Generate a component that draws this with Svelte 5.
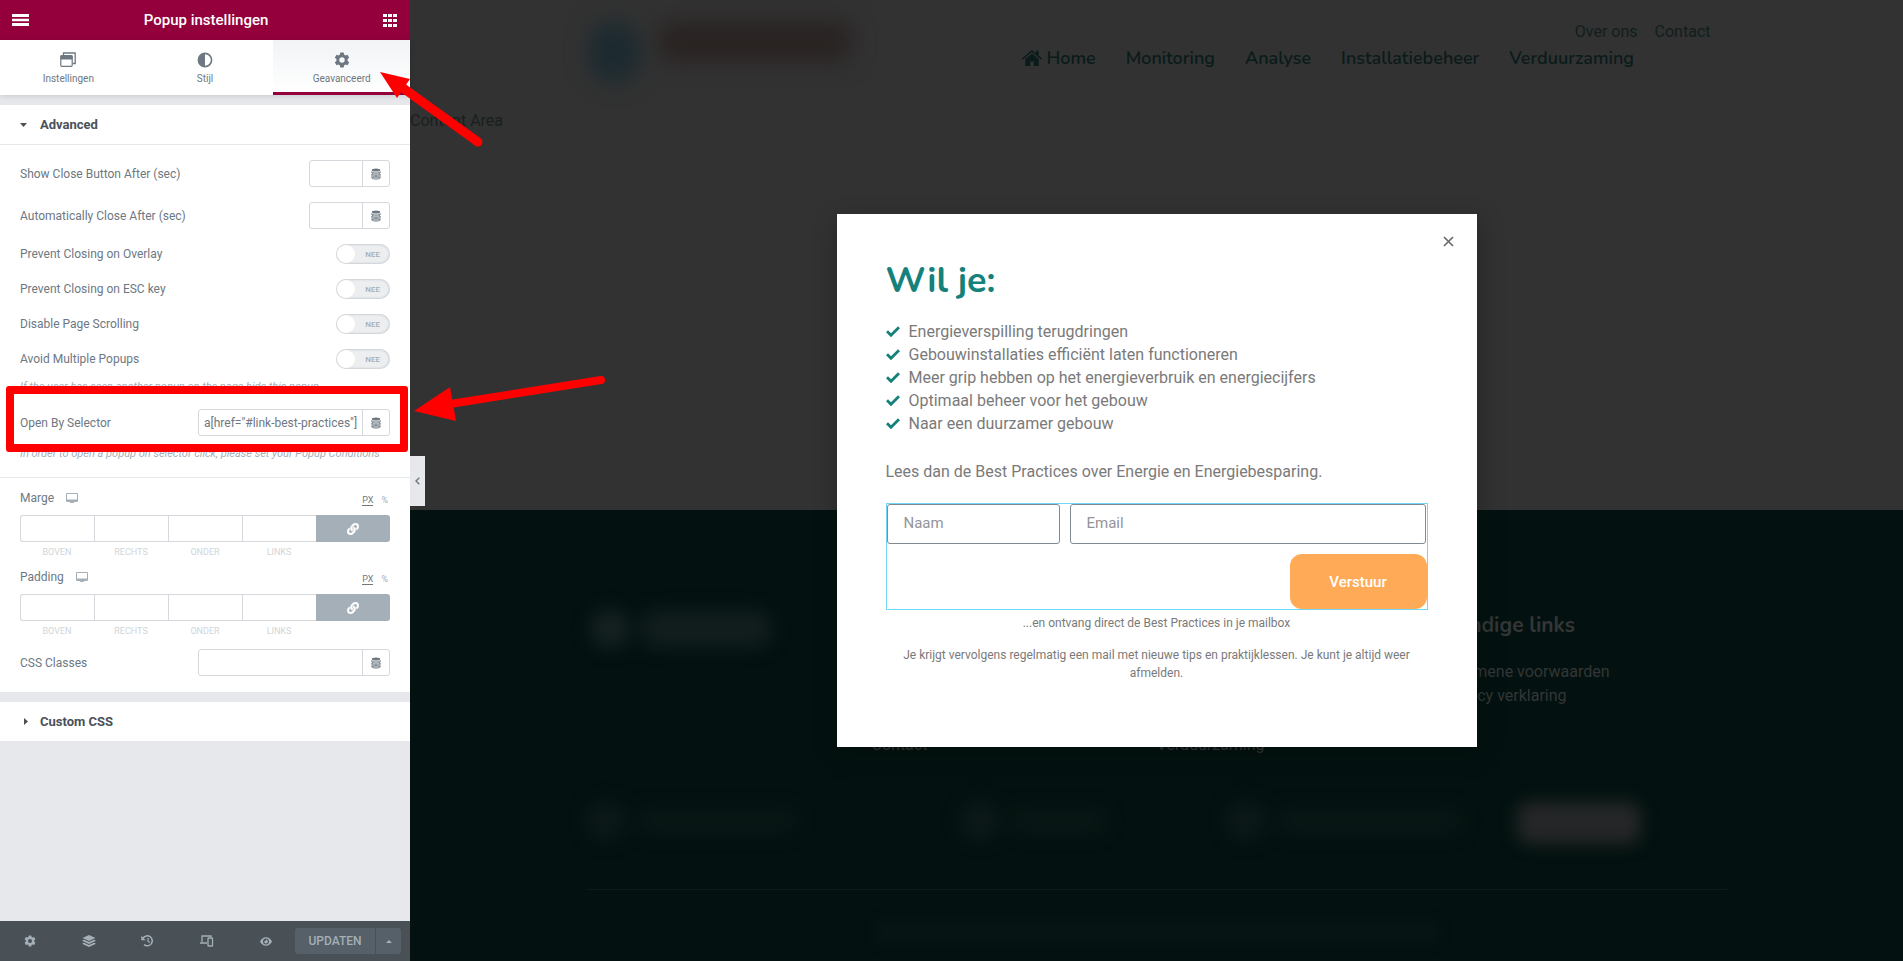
<script>
  const tabs = [
    { id: 'settings', label: 'Instellingen' },
    { id: 'style', label: 'Stijl' },
    { id: 'advanced', label: 'Geavanceerd' }
  ];
  const switches = ['Prevent Closing on Overlay', 'Prevent Closing on ESC key', 'Disable Page Scrolling', 'Avoid Multiple Popups'];
  const sides = ['Boven', 'Rechts', 'Onder', 'Links'];
  const nav = ['Monitoring', 'Analyse', 'Installatiebeheer', 'Verduurzaming'];
  const benefits = [
    'Energieverspilling terugdringen',
    'Gebouwinstallaties efficiënt laten functioneren',
    'Meer grip hebben op het energieverbruik en energiecijfers',
    'Optimaal beheer voor het gebouw',
    'Naar een duurzamer gebouw'
  ];
  let active = $state('advanced');
  let selector = $state('a[href="#link-best-practices"]');
</script>

{#snippet database()}
  <svg width="10" height="12" viewBox="0 0 10 12" fill="none" stroke="currentColor" stroke-width=".9" aria-hidden="true">
    <ellipse cx="5" cy="2" rx="4.200" ry="1.500" fill="currentColor" stroke="none" />
    <path d="M.8 3.600c0 1.800 8.400 1.800 8.400 0v1.200c0 1.700-8.400 1.700-8.400 0zM.8 6.100c0 1.700 8.400 1.700 8.400 0v1.200c0 1.700-8.400 1.700-8.400 0zM.8 8.600c0 1.700 8.400 1.700 8.400 0v1.200c0 1.700-8.400 1.700-8.400 0z" />
  </svg>
{/snippet}

{#snippet gear(size)}
  <svg width={size} height={size} viewBox="0 0 16 16" fill="currentColor" fill-rule="evenodd" aria-hidden="true">
    <path d="M6.300.6h3.400l.4 2 1.400.8 2-.7 1.700 3-1.600 1.400v1.800l1.600 1.400-1.700 3-2-.7-1.400.8-.4 2H6.300l-.4-2-1.400-.8-2 .7-1.700-3 1.600-1.400V7.100L.8 5.700l1.700-3 2 .7 1.400-.8zM8 5.300a2.700 2.700 0 1 0 0 5.400 2.700 2.700 0 0 0 0-5.400z" />
  </svg>
{/snippet}

{#snippet dimensions(name)}
  <fieldset class="dims">
    <legend class="sr">{name}</legend>
    <div class="dims-head">
      <span>{name}</span>
      <svg width="12" height="10" viewBox="0 0 12 10" fill="#a4afb7" aria-hidden="true"><path fill-rule="evenodd" d="M1 0h10a1 1 0 0 1 1 1v7a1 1 0 0 1-1 1H8L7.500 10h-3L4 9H1a1 1 0 0 1-1-1V1a1 1 0 0 1 1-1zM1 1v5.500h10V1z" /></svg>
      <span class="units"><button class="unit on">PX</button><button class="unit">%</button></span>
    </div>
    <div class="dims-grid">
      {#each sides as side}
        <label><input type="text" /><span>{side}</span></label>
      {/each}
      <button class="link" aria-label="Link">
        <svg width="12" height="12" viewBox="0 0 512 512" fill="#fff" stroke="#fff" stroke-width="16" aria-hidden="true"><path d="M326.612 185.391c59.747 59.809 58.927 155.698.36 214.590-.11.120-.240.250-.360.370l-67.200 67.200c-59.270 59.270-155.699 59.262-214.960 0-59.270-59.260-59.270-155.700 0-214.960l37.106-37.106c9.840-9.840 26.786-3.300 27.294 10.606.648 17.722 3.826 35.527 9.690 52.721 1.986 5.822.567 12.262-3.783 16.612l-13.087 13.087c-28.026 28.026-28.905 73.660-1.155 101.960 28.024 28.579 74.086 28.749 102.325.510l67.200-67.190c28.191-28.191 28.073-73.757 0-101.830-3.701-3.694-7.429-6.564-10.341-8.569a16.037 16.037 0 0 1-6.947-12.606c-.396-10.567 3.348-21.456 11.698-29.806l21.054-21.055c5.521-5.521 14.182-6.199 20.584-1.731a152.482 152.482 0 0 1 20.522 17.197zM467.547 44.449c-59.261-59.262-155.690-59.270-214.960 0l-67.200 67.200c-.120.120-.250.250-.360.370-58.566 58.892-59.387 154.781.360 214.590a152.454 152.454 0 0 0 20.521 17.196c6.402 4.468 15.064 3.789 20.584-1.731l21.054-21.055c8.350-8.350 12.094-19.239 11.698-29.806a16.037 16.037 0 0 0-6.947-12.606c-2.912-2.005-6.640-4.875-10.341-8.569-28.073-28.073-28.191-73.639 0-101.830l67.200-67.190c28.239-28.239 74.300-28.069 102.325.510 27.750 28.300 26.872 73.934-1.155 101.960l-13.087 13.087c-4.350 4.350-5.769 10.790-3.783 16.612 5.864 17.194 9.042 34.999 9.690 52.721.509 13.906 17.454 20.446 27.294 10.606l37.106-37.106c59.271-59.259 59.271-155.699.001-214.959z" /></svg>
      </button>
    </div>
  </fieldset>
{/snippet}

<div class="app">
  <aside class="panel">
    <header class="bar">
      <button aria-label="Menu"><svg width="17" height="12" viewBox="0 0 17 12" fill="#fff"><path d="M0 0h17v3H0zM0 4.700h17v2.600H0zM0 9h17v3H0z" /></svg></button>
      <h1>Popup instellingen</h1>
      <button aria-label="Widgets"><svg width="14" height="13" viewBox="0 0 14 13" fill="#fff"><path d="M0 0h4v3H0zM5 0h4v3H5zM10 0h4v3h-4zM0 5h4v3H0zM5 5h4v3H5zM10 5h4v3h-4zM0 10h4v3H0zM5 10h4v3H5zM10 10h4v3h-4z" /></svg></button>
    </header>

    <nav class="tabs">
      {#each tabs as tab}
        <button class:active={active === tab.id} onclick={() => (active = tab.id)}>
          {#if tab.id === 'settings'}
            <svg width="16" height="16" viewBox="0 0 16 16" fill="none" stroke="currentColor" aria-hidden="true"><rect x=".8" y="3.500" width="11.400" height="10.800" rx="1" stroke-width="1.200" /><path d="M.5 3.500h12v4H.5z" fill="currentColor" stroke="none" /><path d="M3.500 3V1h11.700v10.500h-2.500" stroke-width="1.300" /></svg>
          {:else if tab.id === 'style'}
            <svg width="16" height="16" viewBox="0 0 16 16" aria-hidden="true"><circle cx="8" cy="8" r="6.600" fill="none" stroke="currentColor" stroke-width="1.600" /><path d="M8 1a7 7 0 0 0 0 14z" fill="currentColor" /></svg>
          {:else}
            {@render gear(16)}
          {/if}
          <span>{tab.label}</span>
        </button>
      {/each}
    </nav>

    <section class="block">
      <button class="block-head ruled"><svg width="7" height="4" viewBox="0 0 7 4" fill="currentColor"><path d="M0 0h7L3.500 4z" /></svg>Advanced</button>
      <div class="controls">
        {#each ['Show Close Button After (sec)', 'Automatically Close After (sec)'] as label, i}
          <div class="row field-row">
            <label for="num{i}">{label}</label>
            <div class="field small"><input id="num{i}" type="text" /><button aria-label="Dynamic">{@render database()}</button></div>
          </div>
        {/each}
        {#each switches as label}
          <label class="row switch-row">
            <span>{label}</span>
            <span class="switch"><input type="checkbox" /><i></i><em>Nee</em></span>
          </label>
        {/each}
        <p class="hint first">If the user has seen another popup on the page hide this popup</p>
        <div class="row marked">
          <label for="sel">Open By Selector</label>
          <div class="field"><input id="sel" type="text" bind:value={selector} /><button aria-label="Dynamic">{@render database()}</button></div>
        </div>
        <p class="hint">In order to open a popup on selector click, please set your Popup Conditions</p>
      </div>
      <div class="controls spacing">
        {@render dimensions('Marge')}
        {@render dimensions('Padding')}
        <div class="row">
          <label for="css">CSS Classes</label>
          <div class="field"><input id="css" type="text" /><button aria-label="Dynamic">{@render database()}</button></div>
        </div>
      </div>
    </section>

    <section class="block">
      <button class="block-head"><svg class="side" width="4" height="7" viewBox="0 0 4 7" fill="currentColor"><path d="M0 0v7l4-3.500z" /></svg>Custom CSS</button>
    </section>

    <footer class="tools">
      <button aria-label="Settings">{@render gear(12)}</button>
      <button aria-label="Navigator"><svg width="14" height="12" viewBox="0 0 14 12" fill="currentColor"><path d="M7 0l6.500 3L7 6 .5 3z" /><path d="M.5 5.300L2 4.700l5 2.300 5-2.300 1.500.6v.7L7 9 .5 6zM.5 8.300L2 7.700 7 10l5-2.300 1.500.6V9L7 12 .5 9z" /></svg></button>
      <button aria-label="History"><svg width="13" height="12" viewBox="0 0 13 12" fill="none" stroke="currentColor" stroke-width="1.500"><path d="M2 3.200A5 5 0 1 1 3 9.600" /><path d="M7 3v3.300l1.800 1.300" stroke-width="1.200" /><path d="M.3.8v4.400h4.400z" fill="currentColor" stroke="none" /></svg></button>
      <button aria-label="Responsive"><svg width="14" height="12" viewBox="0 0 14 12" fill="none" stroke="currentColor" stroke-width="1.300"><path d="M2 7V1h9v1M0 8h7" /><rect x="8" y="3" width="4.500" height="8" rx=".6" /></svg></button>
      <button aria-label="Preview"><svg width="12" height="9" viewBox="0 0 12 9" fill="currentColor" fill-rule="evenodd"><path d="M6 .3c2.800 0 4.800 1.700 6 4.200-1.200 2.500-3.200 4.200-6 4.200S1.200 7 0 4.500C1.200 2 3.200.3 6 .3zm0 1.200a3 3 0 1 0 0 6 3 3 0 0 0 0-6zm0 1.100a1.900 1.900 0 1 1-1.900 1.900L5.500 4z" /></svg></button>
      <div class="publish"><button>Updaten</button><button aria-label="Options"><svg width="6" height="3" viewBox="0 0 6 3" fill="currentColor"><path d="M3 0l3 3H0z" /></svg></button></div>
    </footer>
  </aside>

  <main class="preview">
    <header class="site-head">
      <div class="logo"><i></i><b></b></div>
      <div class="menus">
        <nav class="top-menu"><a href="#over">Over ons</a><a href="#contact">Contact</a></nav>
        <nav class="main-menu">
          <a href="#home"><svg width="20" height="16" viewBox="0 0 20 16" fill="currentColor" aria-hidden="true"><path d="M10 0l4 3.400V.8h2.600v4.800L20 8.500l-1 1.100-9-7.500-9 7.500-1-1.100z" /><path d="M10 3.600l6.800 5.700V16h-5v-4.500H8.300V16h-5V9.300z" /></svg>Home</a>
          {#each nav as item}<a href="#{item}">{item}</a>{/each}
        </nav>
      </div>
    </header>
    <div class="content">Content Area</div>
    <footer class="site-foot">
      <div class="foot-inner">
        <div class="columns">
          <div class="ghost"><i class="dot"></i><i class="pill"></i></div>
          <a class="low" href="#contact">Contact</a>
          <a class="low" href="#verduurzaming">Verduurzaming</a>
          <div class="links">
            <h3>Handige links</h3>
            <a href="#voorwaarden">Algemene voorwaarden</a>
            <a href="#privacy">Privacy verklaring</a>
          </div>
        </div>
        <div class="contact-row">
          <div class="ghost dim"><i class="dot"></i><i class="pill"></i></div>
          <div class="ghost dim narrow"><i class="dot"></i><i class="pill"></i></div>
          <div class="ghost dim wide"><i class="dot"></i><i class="pill"></i></div>
          <i class="badge"></i>
        </div>
        <div class="copyright"><i></i></div>
      </div>
    </footer>

    <div class="overlay">
      <div class="dialog" role="dialog" aria-label="Wil je:">
        <button class="close" aria-label="Sluiten"><svg width="11" height="11" viewBox="0 0 11 11" stroke="#6b6b6b" stroke-width="1.700"><path d="M1 1l9 9M10 1l-9 9" /></svg></button>
        <h2>Wil je:</h2>
        <ul>
          {#each benefits as text}
            <li><svg width="14" height="11" viewBox="0 0 14 11" fill="none" stroke="#16817b" stroke-width="2.800" aria-hidden="true"><path d="M1 5.300l4 4L13 1.200" /></svg>{text}</li>
          {/each}
        </ul>
        <p class="lead">Lees dan de Best Practices over Energie en Energiebesparing.</p>
        <form onsubmit={(e) => e.preventDefault()}>
          <div class="inputs">
            <input class="name" type="text" placeholder="Naam" aria-label="Naam" />
            <input class="email" type="email" placeholder="Email" aria-label="Email" />
          </div>
          <button>Verstuur</button>
        </form>
        <p class="note">...en ontvang direct de Best Practices in je mailbox</p>
        <p class="note">Je krijgt vervolgens regelmatig een mail met nieuwe tips en praktijklessen. Je kunt je altijd weer afmelden.</p>
      </div>
    </div>
    <button class="collapse" aria-label="Paneel verbergen"><svg width="5" height="8" viewBox="0 0 5 8" fill="none" stroke="#6d7882" stroke-width="1.400"><path d="M4.300.7L1 4l3.300 3.300" /></svg></button>
  </main>

  <svg class="arrows" width="620" height="440" viewBox="0 0 620 440" fill="#f00" stroke="#f00" aria-hidden="true">
    <path d="M380 72l30 7-13 19z" stroke="none" /><path d="M403 88l75 54" stroke-width="9" stroke-linecap="round" />
    <path d="M414 411l36-24 6 34z" stroke="none" /><path d="M450 404l151-24" stroke-width="8" stroke-linecap="round" />
  </svg>
</div>

<style>
  :global(body) { margin: 0; }
  .app, .app * { box-sizing: border-box; }
  .app { position: relative; display: flex; min-height: 100vh; font-family: Roboto, sans-serif; background: #323232; overflow: hidden; }
  button { border: 0; background: none; padding: 0; font: inherit; color: inherit; text-transform: inherit; cursor: pointer; }
  svg { display: block; flex: none; }
  a { color: inherit; text-decoration: none; }
  h1, h2, h3, p, ul { margin: 0; padding: 0; }
  input { font: inherit; color: inherit; min-width: 0; }
  .sr { position: absolute; width: 1px; height: 1px; overflow: hidden; clip-path: inset(50%); }

  .panel { display: flex; flex-direction: column; flex: 0 0 410px; background: #e6e8ec; color: #6d7882; font-size: 12px; }
  .bar { display: flex; align-items: center; justify-content: space-between; height: 40px; padding: 0 13px 0 12px; background: #93003c; color: #fff; }
  .bar h1 { font-size: 15px; font-weight: 500; }
  .tabs { display: grid; grid-template-columns: repeat(3, 1fr); height: 55px; background: #fff; box-shadow: 0 1px 6px rgba(0, 0, 0, 0.14); }
  .tabs button { display: flex; flex-direction: column; align-items: center; gap: 5px; padding-top: 12px; border-bottom: 3px solid transparent; font-size: 10px; line-height: 12px; }
  .tabs .active { border-color: #93003c; background: linear-gradient(#f1f3f5, #fff); }
  .block { margin-top: 10px; background: #fff; }
  .block-head { display: flex; align-items: center; gap: 13px; width: 100%; height: 39px; padding-left: 20px; font-size: 13px; font-weight: 700; color: #495157; }
  .ruled { height: 40px; border-bottom: 1px solid #e6e9ec; }
  .side { margin: 0 -1px 0 4px; }
  .controls { padding: 15px 20px; }
  .row { display: flex; align-items: center; justify-content: space-between; }
  .field-row { margin-bottom: 15px; }
  .switch-row { height: 20px; margin-bottom: 15px; }
  .field { display: flex; width: 192px; height: 27px; border: 1px solid #d5d8dc; border-radius: 3px; background: #fff; overflow: hidden; }
  .field.small { width: 81px; }
  .field input { flex: 1; border: 0; outline: 0; padding: 0 5px; background: none; }
  .field button { display: grid; place-items: center; width: 27px; border-left: 1px solid #d5d8dc; }
  .switch { position: relative; display: flex; align-items: center; justify-content: flex-end; width: 54px; height: 20px; padding-right: 10px; border-radius: 10px; background: #eceef0; box-shadow: inset 0 0 2px 1px #ccd0d4; }
  .switch input { position: absolute; inset: 0; margin: 0; opacity: 0; }
  .switch i { position: absolute; left: 1px; top: 1px; width: 18px; height: 18px; border-radius: 50%; background: #fff; }
  .switch em { font-size: 8px; font-style: normal; font-weight: 500; text-transform: uppercase; color: #a4afb7; }
  .hint { font-size: 11px; line-height: 16px; font-style: italic; color: #a4afb7; white-space: nowrap; }
  .hint.first { margin-top: -5px; }
  .marked { position: relative; height: 66px; margin: -9px -18px -6px -14px; padding: 7px 18px 0 14px; outline: 8px solid #f00; outline-offset: -8px; border-radius: 3px; }
  .spacing { padding: 13px 20px 16px; border-top: 1px solid #e6e9ec; }
  .dims { border: 0; margin: 0 0 12px; padding: 0; min-width: 0; }
  .dims-head { display: flex; align-items: center; gap: 12px; height: 14px; margin-bottom: 10px; }
  .units { display: flex; gap: 8px; margin-left: auto; padding: 4px 2px 0 0; font-size: 9px; line-height: 10px; color: #a4afb7; }
  .on { color: #6d7882; border-bottom: 1px solid #6d7882; }
  .dims-grid { display: grid; grid-template-columns: repeat(5, 1fr); align-items: start; }
  .dims-grid input { display: block; width: 100%; height: 27px; border: 1px solid #d5d8dc; border-right-width: 0; outline: 0; padding: 0 5px; }
  .dims-grid label:first-child input { border-radius: 3px 0 0 3px; }
  .dims-grid span { display: block; padding-top: 4px; font-size: 9px; line-height: 12px; text-align: center; text-transform: uppercase; color: #d0d5da; }
  .link { display: grid; place-items: center; height: 27px; border-radius: 0 3px 3px 0; background: #a4afb7; }

  .tools { display: flex; align-items: center; height: 40px; margin-top: auto; padding-right: 9px; background: #495157; color: #a4afb7; }
  .tools > button { display: grid; place-items: center; flex: 1; height: 40px; }
  .publish { display: flex; gap: 1px; height: 26px; font-weight: 500; text-transform: uppercase; }
  .publish button { display: grid; place-items: center; width: 25px; background: #556068; border-radius: 0 3px 3px 0; }
  .publish button:first-child { width: 80px; border-radius: 3px 0 0 3px; }

  .preview { position: relative; display: flex; flex-direction: column; flex: 1; min-width: 0; font-size: 16px; color: #191f1f; }
  .site-head { display: flex; justify-content: space-between; width: 1140px; max-width: 100%; height: 110px; margin: 0 auto; padding-top: 21px; }
  .logo { display: flex; gap: 18px; filter: blur(11px); }
  .logo i { width: 54px; height: 62px; border-radius: 50%; background: #1c2a30; }
  .logo b { width: 192px; height: 40px; border-radius: 8px; background: #292322; }
  .menus { width: 705px; }
  .top-menu { display: flex; justify-content: flex-end; gap: 17px; padding-right: 16px; line-height: 22px; color: #111e1d; }
  .main-menu { display: flex; gap: 30px; padding-top: 4px; font: 600 18px/22px Nunito, "Open Sans", sans-serif; color: #0a1b1a; white-space: nowrap; }
  .main-menu a { display: flex; align-items: center; gap: 5px; }
  .content { height: 400px; line-height: 22px; }
  .site-foot { flex: 1; background: #031210; color: #343636; }
  .foot-inner { width: 1140px; max-width: 100%; margin: 0 auto; padding-top: 100px; }
  .columns { display: grid; grid-template-columns: repeat(4, 1fr); height: 147px; }
  .links { line-height: 24px; white-space: nowrap; }
  .links h3 { font: 700 21px/30px Nunito, "Open Sans", sans-serif; margin-bottom: 20px; }
  .links a { display: block; }
  .low { align-self: end; line-height: 24px; }
  .ghost { display: flex; align-items: center; align-self: start; gap: 12px; filter: blur(9px); }
  .dot { width: 38px; height: 38px; margin-left: 4px; border-radius: 50%; background: #162222; }
  .pill { width: 130px; height: 36px; border-radius: 15px; background: #121e1e; }
  .contact-row { display: grid; grid-template-columns: 374px 266px 290px 1fr; height: 133px; padding-top: 45px; border-bottom: 1px solid #0d1d1b; }
  .dim .dot { margin-left: 0; background: #0c1918; }
  .dim .pill { width: 160px; height: 24px; background: #091715; }
  .narrow .pill { width: 95px; }
  .wide .pill { width: 185px; }
  .badge { width: 124px; height: 42px; border-radius: 14px; background: #252627; filter: blur(8px); }
  .copyright { display: grid; place-items: center; padding-top: 32px; filter: blur(6px); }
  .copyright i { width: 560px; height: 20px; background: #071614; }

  .overlay { position: absolute; inset: 0; display: grid; place-items: center; }
  .dialog { position: relative; width: 640px; max-width: 100%; min-height: 533px; padding: 46px 49px; background: #fff; color: #7a7a7a; box-shadow: 2px 8px 23px 3px rgba(0, 0, 0, 0.2); }
  .close { position: absolute; top: 22px; right: 23px; }
  h2 { font: 700 36px/42px Nunito, "Open Sans", sans-serif; color: #16817b; }
  ul { margin-top: 18px; list-style: none; }
  li { display: flex; align-items: center; gap: 9px; line-height: 23px; height: 23px; }
  .lead { margin: 25px 0 19px; line-height: 24px; }
  form { display: flex; flex-direction: column; justify-content: space-between; height: 107px; border: 1px solid #71d7f7; }
  .inputs { display: flex; gap: 10px; }
  form input { height: 40px; padding: 0 16px 2px; border: 1px solid #818a91; border-radius: 3px; font-size: 15px; outline: 0; }
  form input::placeholder { color: #939598; opacity: 1; }
  .name { width: 173px; }
  .email { flex: 1; margin-right: 1px; }
  form button { width: 137px; height: 55px; margin-left: auto; border-radius: 12px; background: #ffaa56; color: #fff; font-size: 15px; font-weight: 500; }
  .note { margin: 4px 0 14px; font-size: 12px; line-height: 18px; text-align: center; }
  .collapse { position: absolute; left: 0; top: 456px; display: grid; place-items: center; width: 15px; height: 50px; background: #e6e8ec; }
  .arrows { position: absolute; left: 0; top: 0; pointer-events: none; }
</style>
